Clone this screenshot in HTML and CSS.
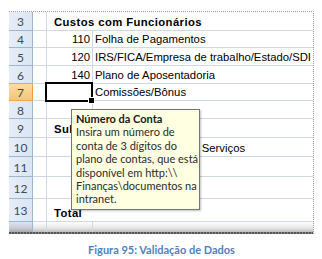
FILE: index.html
```html
<!DOCTYPE html>
<html lang="pt">
<head>
<meta charset="utf-8">
<title>Validação de Dados</title>
<link rel="stylesheet" href="styles.css">
</head>
<body>
<div class="figure">
  <div class="sheet">
    <div class="grid">
      <div class="rh r3">3</div><div class="c b r3"></div><div class="c cd r3 bold span">Custos com Funcionários</div>
      <div class="rh r4">4</div><div class="c b r4"></div><div class="c num r4">110</div><div class="c d r4">Folha de Pagamentos</div>
      <div class="rh r5">5</div><div class="c b r5"></div><div class="c num r5">120</div><div class="c d r5">IRS/FICA/Empresa de trabalho/Estado/SDI</div>
      <div class="rh r6">6</div><div class="c b r6"></div><div class="c num r6">140</div><div class="c d r6">Plano de Aposentadoria</div>
      <div class="rh r7 active">7</div><div class="c b r7"></div><div class="c num r7 sel"></div><div class="c d r7">Comissões/Bônus</div>
      <div class="rh r8">8</div><div class="c b r8"></div><div class="c num r8"></div><div class="c d r8"></div>
      <div class="rh r9">9</div><div class="c b r9"></div><div class="c cd r9 bold span">Subcontratados</div>
      <div class="rh r10">10</div><div class="c b r10"></div><div class="c num r10">210</div><div class="c d r10">Consultoria e Outros Serviços</div>
      <div class="rh r11">11</div><div class="c b r11"></div><div class="c num r11">220</div><div class="c d r11"></div>
      <div class="rh r12">12</div><div class="c b r12"></div><div class="c num r12"></div><div class="c d r12"></div>
      <div class="rh r13">13</div><div class="c b r13"></div><div class="c cd r13 bold span">Total</div>
      <div class="rh r14"></div><div class="c b r14"></div><div class="c num r14"></div><div class="c d r14"></div>
    </div>
    <div class="edge"></div>
    <div class="tip">
      <div class="tip-title">Número da Conta</div>
      <div class="tip-body">Insira um número de<br>conta de 3 dígitos do<br>plano de contas, que está<br>disponível em http:\\<br>Finanças\documentos na<br>intranet.</div>
    </div>
  </div>
  <div class="caption">Figura 95: Validação de Dados</div>
</div>
</body>
</html>
```
FILE: styles.css
```css
* { box-sizing: border-box; }
html, body { margin: 0; padding: 0; background: #fff; }
body { width: 322px; height: 259px; overflow: hidden; }

.figure { padding: 11px 0 0 9px; }

.sheet {
  position: relative;
  width: 305px;
  border-top: 1px dotted #9a9a9a;
  border-right: 1px dotted #9a9a9a;
}

.grid {
  display: grid;
  grid-template-columns: 24px 14px 46px 1fr;
  grid-template-rows: 19px 17px 18px 18px 17px 18px 19px 19px 20px 22px 23px 10px;
  font-family: "Liberation Sans", Arial, sans-serif;
  font-size: 11.3px;
  color: #000;
}

.rh {
  background: linear-gradient(to right, #e6edf8, #dbe5f3);
  border-right: 1px solid #9eb6ce;
  border-bottom: 1px solid #9eb6ce;
  color: #3b4a60;
  font-family: "Lato", "Liberation Sans", sans-serif;
  font-size: 12px;
  display: flex;
  align-items: center;
  justify-content: center;
  padding-top: 1px;
}
.rh.active {
  background: linear-gradient(to bottom, #fbdca3, #f6c678);
  border-right-color: #f29b3a;
  border-bottom-color: #f2a74a;
}

.c {
  border-right: 1px solid #d0d7e5;
  border-bottom: 1px solid #d0d7e5;
  display: flex;
  align-items: flex-end;
  padding-bottom: 1px;
  white-space: nowrap;
  line-height: 13px;
}
.num { justify-content: flex-end; padding-right: 2px; }
.d { padding-left: 2px; border-right: none; }
.cd { grid-column: 3 / 5; padding-left: 7px; border-right: none; }
.bold { font-weight: bold; letter-spacing: 0.4px; }

.sel { position: relative; }
.sel::after {
  content: "";
  position: absolute;
  left: -2px; top: -2px; right: -1px; bottom: -2px;
  border: 2px solid #000;
}
.sel::before {
  content: "";
  position: absolute;
  right: -3px; bottom: -4px;
  width: 5px; height: 5px;
  background: #000;
  border: 1px solid #fff;
  z-index: 2;
}

.r14 { background: linear-gradient(to bottom, #ffffff, #e6e6e6 60%, #bdbdbd); border-bottom: none; }
.rh.r14 { background: linear-gradient(to bottom, #dbe5f3, #c8ccd2 60%, #a9a9a9); border-bottom: none; }

.edge {
  height: 2px;
  background: repeating-linear-gradient(to right, #555 0 2px, #8a8a8a 2px 3px);
}

.tip {
  position: absolute;
  left: 62px; top: 97px;
  width: 129px; height: 101px;
  background: #ffffe1;
  border: 1px solid #767676;
  box-shadow: 1px 1px 2px rgba(0,0,0,0.25);
  padding: 2px 0 0 4px;
  font-family: "Lato", "Liberation Sans", sans-serif;
  font-size: 11px;
  line-height: 13.4px;
  color: #2b2b2b;
}
.tip-title { font-weight: bold; color: #1a1a1a; }
.tip-body { white-space: nowrap; }

.caption {
  width: 305px;
  margin-top: 9px;
  text-align: center;
  font-family: "Lato", "Liberation Sans", sans-serif;
  font-weight: bold;
  font-size: 11px;
  color: #4f81bd;
}
```
